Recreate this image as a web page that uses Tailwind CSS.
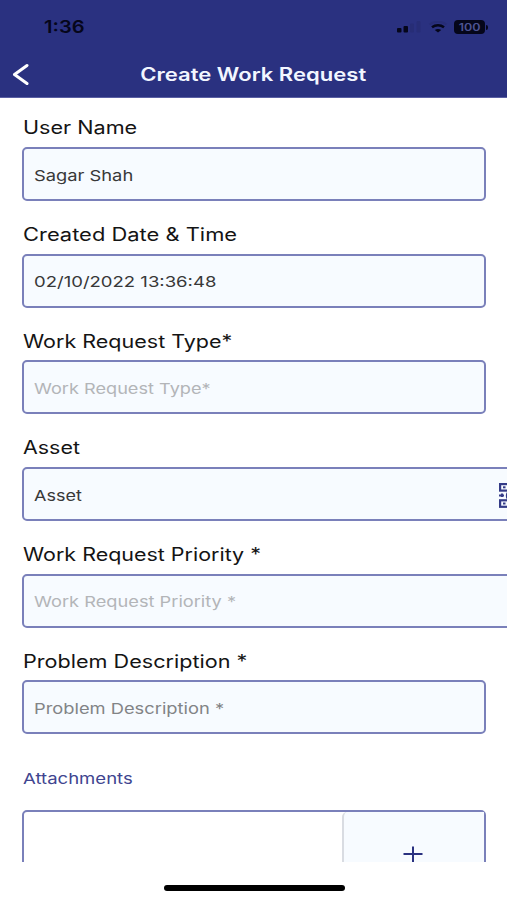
<!DOCTYPE html>
<html lang="en">
<head>
    <meta charset="UTF-8">
    <meta name="viewport" content="width=device-width, initial-scale=1.0">
    <title>Create Work Request</title>
    <script src="https://cdn.jsdelivr.net/npm/@tailwindcss/browser@4"></script>
</head>
<body class="bg-white">
    <div class="w-full h-[900px] overflow-hidden flex flex-col font-['Inter','Liberation_Sans',sans-serif]">
        <!-- Header -->
        <header class="h-[98px] shrink-0 bg-[#2a3180] border-b border-[#5a5fa3]">
            <!-- Status bar -->
            <div class="h-[52px] pl-11 pr-[19px] flex items-center justify-between">
                <span class="inline-block origin-left scale-x-[1.18] text-[17px] leading-5 font-semibold text-[#05061a] pt-0.5">1:36</span>
                <div class="flex items-center pt-0.5">
                    <svg class="w-[25px] h-3" viewBox="0 0 25 12">
                        <rect x="0" y="7" width="4.5" height="4.5" rx="1" fill="#05061a"/>
                        <rect x="6.5" y="5" width="4.5" height="6.5" rx="1" fill="#05061a"/>
                        <rect x="13" y="2.5" width="4" height="9" rx="1" fill="#272d76"/>
                        <rect x="19.5" y="0" width="4" height="11.5" rx="1" fill="#272d76"/>
                    </svg>
                    <svg class="w-5 h-3 ml-1.5" viewBox="0 0 20 12">
                        <path d="M1.5 3.5C6 -.2 14 -.2 18.5 3.5" fill="none" stroke="#272d76" stroke-width="2"/>
                        <path d="M4 6.3C7.5 3.600 12.5 3.600 16 6.3" fill="none" stroke="#05061a" stroke-width="2.600"/>
                        <path d="M6.800 9Q10 7 13.200 9L10 11.500Z" fill="#05061a"/>
                    </svg>
                    <div class="ml-[6px] w-[31px] h-[14px] rounded-[4px] bg-[#05061a] flex items-center justify-center">
                        <span class="scale-x-[1.25] text-[10px] leading-none font-semibold text-[#4d5394]">100</span>
                    </div>
                    <div class="w-[2px] h-[5px] ml-px rounded-r bg-[#05061a]"></div>
                </div>
            </div>
            <!-- Title bar -->
            <div class="relative h-[45px] flex items-center justify-center">
                <svg class="absolute left-3 top-[11px] w-[18px] h-[22px]" viewBox="0 0 18 22" fill="none" stroke="#fff" stroke-width="3" stroke-linecap="round" stroke-linejoin="round">
                    <path d="M15 2.500L2.500 11.500L15 20.500"/>
                </svg>
                <h1 class="scale-x-[1.225] whitespace-nowrap text-[18px] leading-6 font-semibold text-[#f2f6ff] pt-px">Create Work Request</h1>
            </div>
        </header>

        <!-- Form -->
        <main class="h-[764px] shrink-0 overflow-hidden pl-[22px] pt-[18px]">
            <div class="h-[106.700px]">
                <label class="block w-max ml-px origin-left scale-x-[1.2] text-[18px] leading-6 text-[#141414]">User Name</label>
                <div class="mt-[7px] w-[464px] h-[54px] border-2 border-[#7a80ba] rounded-[5px] bg-[#f7fbff] flex items-center pl-[10px] pt-[3px]">
                    <span class="origin-left scale-x-[1.22] text-[15px] leading-5 text-[#383838]">Sagar Shah</span>
                </div>
            </div>
            <div class="h-[106.700px]">
                <label class="block w-max ml-px origin-left scale-x-[1.217] text-[18px] leading-6 text-[#141414]">Created Date &amp; Time</label>
                <div class="mt-[7px] w-[464px] h-[54px] border-2 border-[#7a80ba] rounded-[5px] bg-[#f7fbff] flex items-center pl-[10px] pt-[3px]">
                    <span class="origin-left scale-x-[1.235] text-[15px] leading-5 text-[#383838]">02/10/2022 13:36:48</span>
                </div>
            </div>
            <div class="h-[106.700px]">
                <label class="block w-max ml-px origin-left scale-x-[1.195] text-[18px] leading-6 pt-px text-[#141414]">Work Request Type*</label>
                <div class="mt-[6px] w-[464px] h-[54px] border-2 border-[#7a80ba] rounded-[5px] bg-[#f7fbff] flex items-center pl-[10px] pt-[3px]">
                    <span class="origin-left scale-x-[1.21] text-[15px] leading-5 text-[#b3b5b8]">Work Request Type*</span>
                </div>
            </div>
            <div class="h-[106.700px]">
                <label class="block w-max ml-px origin-left scale-x-[1.19] text-[18px] leading-6 text-[#141414]">Asset</label>
                <div class="mt-[7px] w-[520px] h-[54px] border-2 border-[#7a80ba] rounded-[5px] bg-[#f7fbff] flex items-center pl-[10px] pt-[3px] pr-[15px] justify-between">
                    <span class="origin-left scale-x-[1.2] text-[15px] leading-5 text-[#383838]">Asset</span>
                    <svg class="w-[26px] h-[25px]" viewBox="0 0 26 25" fill="none" stroke="#343b87" stroke-width="2.200">
                        <rect x="1.100" y="1.100" width="8" height="6.500"/>
                        <rect x="4" y="3.300" width="2.500" height="2" fill="#343b87" stroke="none"/>
                        <rect x="1.100" y="17.300" width="8" height="6.500"/>
                        <rect x="4" y="19.500" width="2.500" height="2" fill="#343b87" stroke="none"/>
                        <rect x="17" y="1.100" width="8" height="6.500"/>
                        <path d="M0 12.500H5M3 10.500V14M10 8.500A6 6 0 0 0 9 16"/>
                    </svg>
                </div>
            </div>
            <div class="h-[106.700px]">
                <label class="block w-max ml-px origin-left scale-x-[1.192] text-[18px] leading-6 text-[#141414]">Work Request Priority *</label>
                <div class="mt-[7px] w-[520px] h-[54px] border-2 border-[#7a80ba] rounded-[5px] bg-[#f7fbff] flex items-center pl-[10px] pt-[3px]">
                    <span class="origin-left scale-x-[1.215] text-[15px] leading-5 text-[#b3b5b8]">Work Request Priority *</span>
                </div>
            </div>
            <div class="h-[106.700px]">
                <label class="block w-max ml-px origin-left scale-x-[1.2] text-[18px] leading-6 pt-px text-[#141414]">Problem Description *</label>
                <div class="mt-[6px] w-[464px] h-[54px] border-2 border-[#7a80ba] rounded-[5px] bg-[#f7fbff] flex items-center pl-[10px] pt-[3px]">
                    <span class="origin-left scale-x-[1.22] text-[15px] leading-5 text-[#828486]">Problem Description *</span>
                </div>
            </div>

            <!-- Attachments -->
            <div class="pt-[13px]">
                <h2 class="w-max ml-px origin-left scale-x-[1.235] text-[15px] leading-5 text-[#3f4590]">Attachments</h2>
                <div class="mt-[21px] w-[464px] h-[110px] border-2 border-[#7a80ba] rounded-[5px] flex justify-end">
                    <button class="w-[142px] h-full border-l-2 border-[#d9dce2] rounded-l-[5px] bg-[#f7fbff] flex justify-center pt-[34px] pr-0.5">
                        <svg class="w-5 h-[17px]" viewBox="0 0 20 17" fill="none" stroke="#2a3180" stroke-width="2">
                            <path d="M.5 8H19.500M10 .5V16.500"/>
                        </svg>
                    </button>
                </div>
            </div>
        </main>

        <!-- Home indicator -->
        <div class="flex-1 flex justify-center pt-[23px] pl-px">
            <div class="w-[181px] h-[6px] rounded-full bg-black"></div>
        </div>
    </div>
</body>
</html>
